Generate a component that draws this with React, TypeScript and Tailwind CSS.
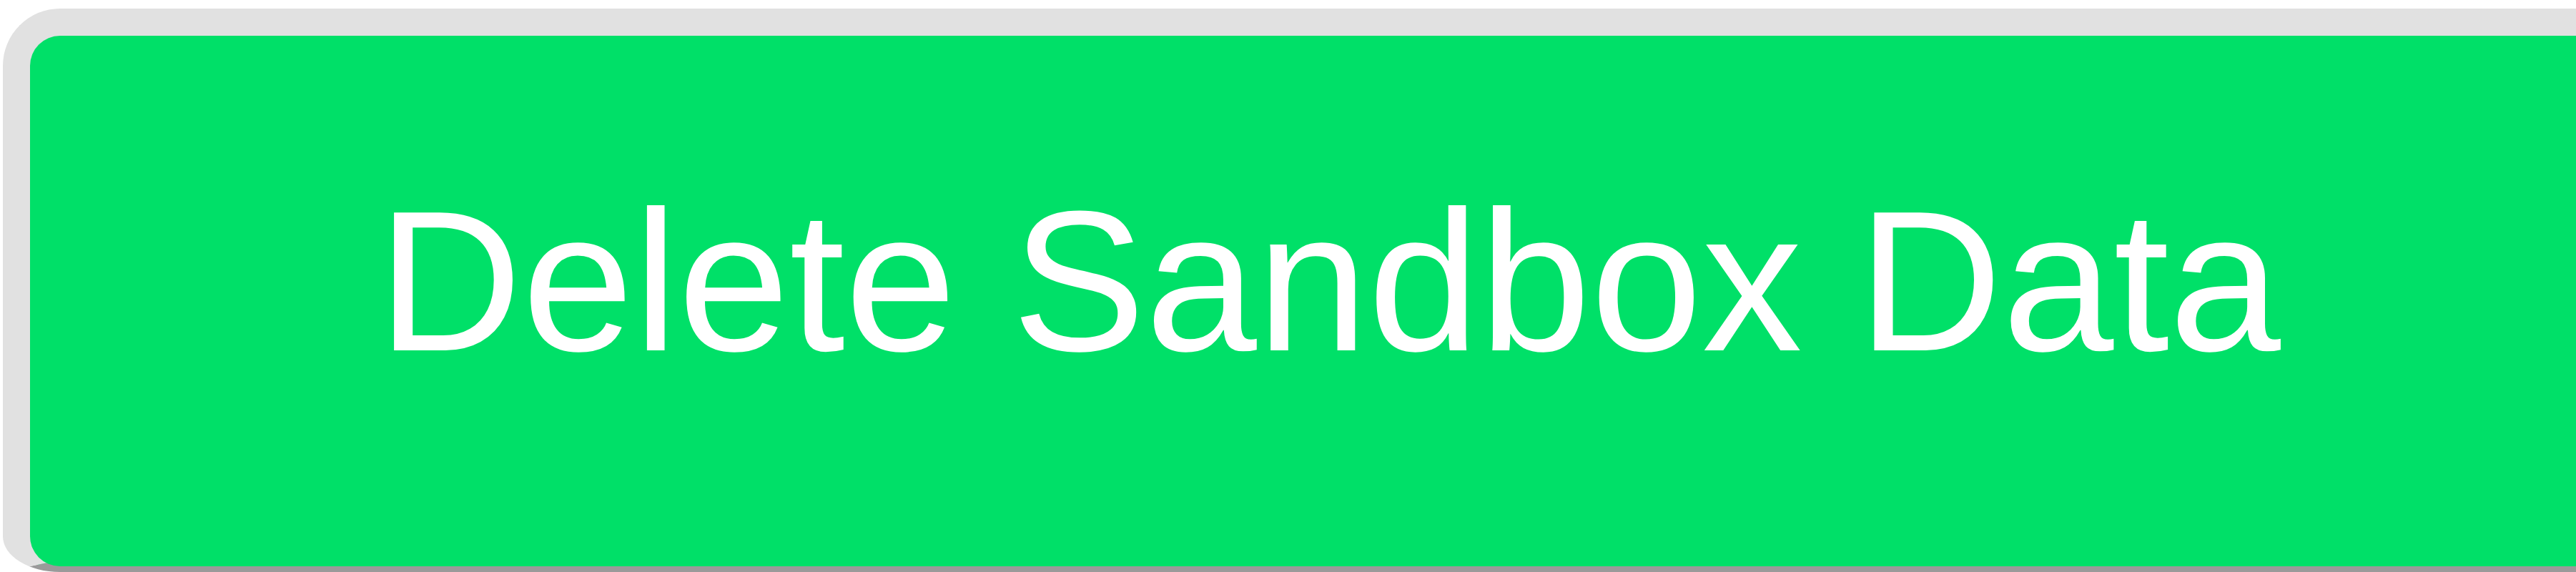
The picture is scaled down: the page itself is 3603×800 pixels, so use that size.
import React from 'react';

// Big sandbox-reset button. It runs off the right and bottom of the window,
// so only the top/left bevel and a strip of the bottom edge are drawn.
function DeleteSandboxButton({ onClick }: { onClick?: () => void }) {
  return (
    <button
      type="button"
      onClick={onClick}
      className="ml-[4px] mt-[12px] flex h-[788px] flex-1 cursor-pointer items-center justify-center rounded-tl-[80px] rounded-bl-[80px_50px] border-t-[38px] border-l-[38px] border-b-[8px] border-r-0 border-t-[#e1e1e1] border-l-[#e1e1e1] border-b-[#9a9a9a] bg-[#00e068] pl-[73px] text-white"
    >
      <span className="mb-[56px] whitespace-nowrap font-['Liberation_Sans',Arial,sans-serif] text-[280px] leading-none">
        Delete Sandbox Data
      </span>
    </button>
  );
}

export default function App() {
  return (
    <div className="flex h-[800px] w-full items-start overflow-hidden bg-white">
      <DeleteSandboxButton />
    </div>
  );
}
